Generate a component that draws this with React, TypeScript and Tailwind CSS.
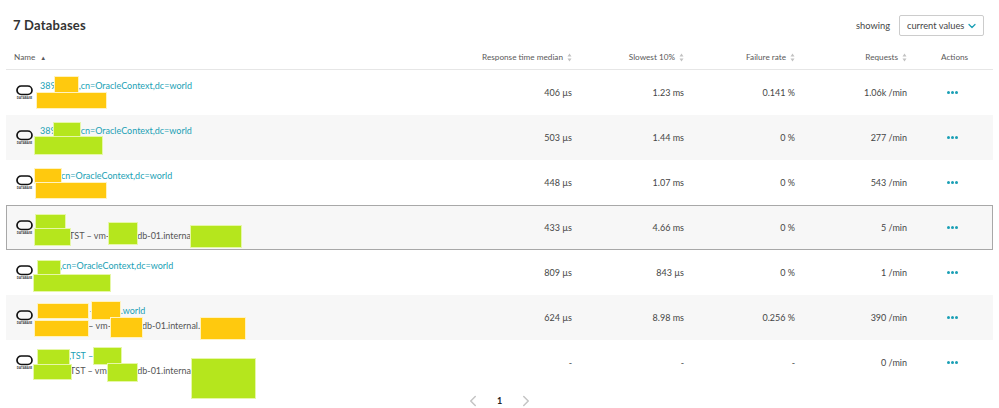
import React from 'react';
import { ChevronDown, ChevronLeft, ChevronRight } from 'lucide-react';

const rowGrid = 'grid grid-cols-[439px_127px_112px_111px_112px_1fr] items-center';

const DbIcon = () => (
    <svg width="18" height="16" viewBox="0 0 18 16" className="shrink-0">
        <rect x="1" y="1" width="15" height="8.5" rx="4.2" fill="none" stroke="#111" strokeWidth="1.7" />
        <text x="8.5" y="13.5" textAnchor="middle" fontSize="3" fontWeight="700" fill="#444" fontFamily="Open Sans, sans-serif">DATABASE</text>
    </svg>
);

const SortIcon = () => (
    <svg width="5" height="9" viewBox="0 0 5 9" className="ml-[4px] shrink-0">
        <path d="M2.5 0.5 L4.5 3.5 L0.5 3.5 Z M2.5 8.5 L4.5 5.5 L0.5 5.5 Z" fill="#c2c2c2" />
    </svg>
);

const Gap = ({ className }: { className: string }) => <span className={`inline-block ${className}`} />;

const Link = ({ children }: { children: React.ReactNode }) => <div className="text-[#1a9fb5] leading-[15px] h-[15px] whitespace-pre">{children}</div>;
const Sub = ({ children }: { children: React.ReactNode }) => <div className="text-[#555] leading-[15px] h-[15px] whitespace-pre">{children}</div>;

const rows = [
    {
        name: <><Link>389<Gap className="w-[23px]" />,cn=OracleContext,dc=world</Link><Sub> </Sub></>,
        median: '406 µs', slowest: '1.23 ms', failure: '0.141 %', requests: '1.06k /min', cls: '',
    },
    {
        name: <><Link>389<Gap className="w-[25px]" />cn=OracleContext,dc=world</Link><Sub> </Sub></>,
        median: '503 µs', slowest: '1.44 ms', failure: '0 %', requests: '277 /min', cls: 'bg-[#f7f7f7]',
    },
    {
        name: <><Link><Gap className="w-[21px]" />cn=OracleContext,dc=world</Link><Sub> </Sub></>,
        median: '448 µs', slowest: '1.07 ms', failure: '0 %', requests: '543 /min', cls: '',
    },
    {
        name: <><Link> </Link><Sub><Gap className="w-[29px]" />TST – vm-<Gap className="w-[28px]" />db-01.interna</Sub></>,
        median: '433 µs', slowest: '4.66 ms', failure: '0 %', requests: '5 /min', cls: 'bg-[#f7f7f7] outline outline-1 -outline-offset-1 outline-[#a8a8a8]',
    },
    {
        name: <><Link><Gap className="w-[20px]" />,cn=OracleContext,dc=world</Link><Sub> </Sub></>,
        median: '809 µs', slowest: '843 µs', failure: '0 %', requests: '1 /min', cls: '',
    },
    {
        name: <><Link><Gap className="w-[47px]" /> – <Gap className="w-[24px]" />.world</Link><Sub><Gap className="w-[46px]" /> – vm-<Gap className="w-[31px]" />db-01.internal.</Sub></>,
        median: '624 µs', slowest: '8.98 ms', failure: '0.256 %', requests: '390 /min', cls: 'bg-[#f7f7f7]',
    },
    {
        name: <><Link><Gap className="w-[29px]" />,TST – </Link><Sub><Gap className="w-[30px]" />TST – vm-<Gap className="w-[27px]" />db-01.interna</Sub></>,
        median: '-', slowest: '-', failure: '-', requests: '0 /min', cls: '',
    },
];

// painted-over blocks from the original capture
const orange = 'absolute bg-[#ffc90e] outline outline-1 outline-[#fff3c0]';
const green = 'absolute bg-[#b5e61d] outline outline-1 outline-[#e6f7a8]';

const Redactions = () => (
    <>
        <div className={`${orange} left-[55px] top-[77px] w-[23px] h-[15px]`} />
        <div className={`${orange} left-[37px] top-[93px] w-[69px] h-[15px]`} />
        <div className={`${green} left-[54px] top-[123px] w-[26px] h-[14px]`} />
        <div className={`${green} left-[35px] top-[137px] w-[67px] h-[17px]`} />
        <div className={`${orange} left-[35px] top-[169px] w-[26px] h-[14px]`} />
        <div className={`${orange} left-[36px] top-[183px] w-[70px] h-[15px]`} />
        <div className={`${green} left-[36px] top-[215px] w-[29px] h-[13px]`} />
        <div className={`${green} left-[35px] top-[229px] w-[35px] h-[16px]`} />
        <div className={`${green} left-[109px] top-[223px] w-[28px] h-[21px]`} />
        <div className={`${green} left-[191px] top-[226px] w-[50px] h-[21px]`} />
        <div className={`${green} left-[38px] top-[261px] w-[22px] h-[14px]`} />
        <div className={`${green} left-[34px] top-[275px] w-[76px] h-[16px]`} />
        <div className={`${orange} left-[38px] top-[304px] w-[50px] h-[14px]`} />
        <div className={`${orange} left-[92px] top-[302px] w-[28px] h-[17px]`} />
        <div className={`${orange} left-[35px] top-[321px] w-[53px] h-[15px]`} />
        <div className={`${orange} left-[111px] top-[318px] w-[31px] h-[19px]`} />
        <div className={`${orange} left-[201px] top-[318px] w-[44px] h-[21px]`} />
        <div className={`${green} left-[38px] top-[350px] w-[31px] h-[14px]`} />
        <div className={`${green} left-[94px] top-[348px] w-[27px] h-[16px]`} />
        <div className={`${green} left-[34px] top-[365px] w-[37px] h-[14px]`} />
        <div className={`${green} left-[108px] top-[364px] w-[29px] h-[17px]`} />
        <div className={`${green} left-[192px] top-[359px] w-[63px] h-[39px]`} />
    </>
);

export default function App() {
    return (
        <div className="relative w-[999px] h-[408px] overflow-hidden bg-white text-[#454646] text-[9px] font-['Lato',sans-serif]">
            <div className="flex items-center justify-between h-[51px] pl-[13px] pr-[15px]">
                <h1 className="text-[13px] font-bold text-[#333] tracking-[0.2px]">7 Databases</h1>
                <div className="flex items-center gap-[9px]">
                    <span className="text-[9.3px]">showing</span>
                    <button className="flex items-center justify-between w-[85px] h-[21px] pl-[7px] pr-[5px] bg-white border border-[#ccc] rounded-[2px] text-[9.3px] whitespace-nowrap">
                        current values
                        <ChevronDown size={12} className="text-[#1a9fb5] shrink-0" strokeWidth={2.5} />
                    </button>
                </div>
            </div>

            <div className={`${rowGrid} h-[19px] pb-[5px] mx-[6px] border-b border-[#e6e6e6] text-[#5a5a5a] text-[8.2px]`}>
                <div className="pl-[8px] flex items-center">Name <span className="ml-[5px] text-[6px]">▲</span></div>
                <div className="flex items-center justify-end">Response time median<SortIcon /></div>
                <div className="flex items-center justify-end">Slowest 10%<SortIcon /></div>
                <div className="flex items-center justify-end">Failure rate<SortIcon /></div>
                <div className="flex items-center justify-end">Requests<SortIcon /></div>
                <div className="pl-[34px]">Actions</div>
            </div>

            <div className="mx-[6px]">
                {rows.map((row, i) => (
                    <div key={i} className={`${rowGrid} h-[45px] ${row.cls}`}>
                        <div className="flex items-center pl-[10px]">
                            <DbIcon />
                            <div className="ml-[6px]">{row.name}</div>
                        </div>
                        <div className="text-right">{row.median}</div>
                        <div className="text-right">{row.slowest}</div>
                        <div className="text-right">{row.failure}</div>
                        <div className="text-right">{row.requests}</div>
                        <div className="pl-[40px] flex gap-[1.5px]">
                            <span className="w-[2.5px] h-[2.5px] rounded-full bg-[#1a9fb5]" />
                            <span className="w-[2.5px] h-[2.5px] rounded-full bg-[#1a9fb5]" />
                            <span className="w-[2.5px] h-[2.5px] rounded-full bg-[#1a9fb5]" />
                        </div>
                    </div>
                ))}
            </div>

            <div className="flex items-center justify-center gap-[15px] h-[32px]">
                <ChevronLeft size={18} className="text-[#c4c4c4]" />
                <span className="font-bold text-[9px] text-[#222]">1</span>
                <ChevronRight size={18} className="text-[#c4c4c4]" />
            </div>

            <Redactions />
        </div>
    );
}
